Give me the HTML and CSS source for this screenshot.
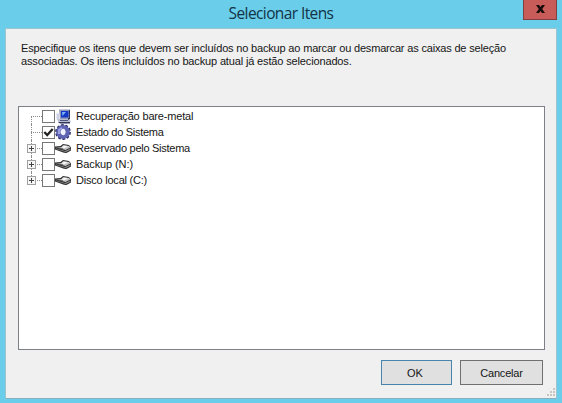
FILE: index.html
```html
<!DOCTYPE html>
<html lang="pt-BR">
<head>
<meta charset="utf-8">
<title>Selecionar Itens</title>
<link rel="stylesheet" href="styles.css">
</head>
<body>
<svg class="defs" aria-hidden="true">
  <symbol id="disk" viewBox="0 0 16 16">
    <path d="M0 6.500L5.500 6 8 4l6 1 2 2.500v3L11.500 13 9 12.700 0 9.500z" fill="#303030"/>
    <path d="M.5 7L6 7.200 8.500 5l5.500 1 1.300 1.500L10.500 10z" fill="#c4c4c4"/>
    <path d="M1 8.500l9 2.500 5.500-2.500v1.300L10.800 12 1 9z" fill="#8b8b8b"/>
    <path d="M6.500 7.200l2.500-1.400 4 .8-3.500 1.600z" fill="#f7f7f7"/>
    <path d="M2 7.500l6 1.600" stroke="#555" stroke-width="1"/>
  </symbol>
</svg>
<main class="window">
  <header class="titlebar">
    <h1 class="title">Selecionar Itens</h1>
    <button class="close" aria-label="Fechar"><svg width="9" height="8" viewBox="0 0 9 8"><path d="M0 0h3l1.500 2L6 0h3L6.200 4 9 8H6L4.500 6 3 8H0l2.800-4z" fill="#170b0b"/></svg></button>
  </header>
  <section class="panel">
    <p class="intro"><span class="line one">Especifique os itens que devem ser incluídos no backup ao marcar ou desmarcar as caixas de seleção</span><span class="line two">associadas. Os itens incluídos no backup atual já estão selecionados.</span></p>
    <ul class="tree">
      <li class="row first"><span class="branch"></span><span class="check"></span>
        <svg class="icon" viewBox="0 0 16 16"><path d="M4 1.500h11v9.500H5z" fill="#8f98b8"/><path d="M6 3h7.500v6.500H6z" fill="#1437c5"/><path d="M7 4h4L7.500 8z" fill="#79b2f5"/><path d="M2 11h12l2 2.500-2 1.500H4z" fill="#b9bdd0"/><path d="M1.500 5l3 1v5l-3 .5z" fill="#cdd1e6"/><path d="M15 2v9l-2 1V10h1V2zM3 14h12v1.500H5z" fill="#30355c"/><path d="M5 12.500h8" stroke="#50567d"/></svg>
        <span class="label l1">Recuperação bare-metal</span></li>
      <li class="row"><span class="branch"></span><span class="check"><svg width="11" height="11" viewBox="0 0 11 11"><path d="M1.300 5L4.200 8 9.700 2" fill="none" stroke="#222" stroke-width="2.300"/></svg></span>
        <svg class="icon" viewBox="0 0 16 16"><circle cx="8" cy="8" r="6.800" fill="none" stroke="#25265e" stroke-width="2.200" stroke-dasharray="2.670 1.600"/><circle cx="8" cy="8" r="4.700" fill="none" stroke="#5f64b2" stroke-width="4.400"/><path d="M4 10V6l3-2" fill="none" stroke="#a5abea" stroke-width="1.700"/><ellipse cx="8.300" cy="8" rx="2" ry="3.300" fill="#f0f1ff"/></svg>
        <span class="label l2">Estado do Sistema</span></li>
      <li class="row"><span class="branch"><span class="plus"></span></span><span class="check"></span><svg class="icon"><use href="#disk"/></svg><span class="label l3">Reservado pelo Sistema</span></li>
      <li class="row"><span class="branch"><span class="plus"></span></span><span class="check"></span><svg class="icon"><use href="#disk"/></svg><span class="label l4">Backup (N:)</span></li>
      <li class="row last"><span class="branch"><span class="plus"></span></span><span class="check"></span><svg class="icon"><use href="#disk"/></svg><span class="label l5">Disco local (C:)</span></li>
    </ul>
    <footer class="actions"><button class="btn ok">OK</button><button class="btn cancel">Cancelar</button></footer>
    <svg class="grip" width="9" height="9" viewBox="0 0 9 9"><path d="M6 0h2v2H6zM3 3h2v2H3zM6 3h2v2H6zM0 6h2v2H0zM3 6h2v2H3zM6 6h2v2H6z" fill="#c9c5c0"/></svg>
  </section>
</main>
</body>
</html>
```
FILE: styles.css
```css
* { box-sizing: border-box; }
body { margin: 0; font: 11px/13px "Liberation Sans", Arial, sans-serif; color: #161616; }
.defs { display: none; }
.window { width: 562px; height: 403px; padding: 0 5px; background: #6acdea; display: flex; flex-direction: column; }
.titlebar { height: 28px; flex: none; display: flex; justify-content: flex-end; position: relative; }
.title { position: absolute; left: 0; right: 0; top: 4px; margin: 0; text-align: center; font: 15.5px/19px "Open Sans", "Noto Sans", sans-serif; letter-spacing: -.6px; color: #123447; }
.close { width: 34px; height: 20px; padding: 0; border: 1px solid #843e40; border-top: 0; background: #c75c58; display: flex; align-items: center; justify-content: center; position: relative; }
.close svg { margin-top: -2px; }
.panel { height: 371px; border: 1px solid #9cc5d2; border-bottom-color: #8aaebb; background: #f0f0f0; padding: 13px 12px 0; position: relative; }
.intro { margin: 0; padding-left: 3px; height: 64px; }
.line { display: block; white-space: nowrap; width: max-content; }
.line.one { letter-spacing: -.175px; }
.line.two { letter-spacing: -.145px; }
.tree { list-style: none; margin: 0; padding: 1px 0 0 8px; width: 527px; height: 244px; border: 1px solid #7d8087; background: #fff; }
.row { height: 16px; display: flex; align-items: center; }
.branch { width: 15px; height: 16px; position: relative; flex: none; }
.branch::before { content: ""; position: absolute; left: 4px; top: 0; height: 16px; border-left: 1px dotted #8c8c8c; }
.first .branch::before { top: 8px; height: 8px; }
.last .branch::before { height: 8px; }
.branch::after { content: ""; position: absolute; left: 4px; top: 8px; width: 11px; border-top: 1px dotted #8c8c8c; }
.plus { position: absolute; z-index: 1; left: 0; top: 4px; width: 9px; height: 9px; border: 1px solid #a0a0a0; background: linear-gradient(#444, #444) center/5px 1px no-repeat, linear-gradient(#444, #444) center/1px 5px no-repeat, #f6f6f6; }
.check { width: 13px; height: 13px; flex: none; border: 1px solid #777; background: #fff; }
.check svg { display: block; }
.icon { width: 16px; height: 16px; flex: none; margin-right: 5px; }
.label { white-space: nowrap; }
.l1 { letter-spacing: -.17px; }
.l2 { letter-spacing: -.28px; }
.l3 { letter-spacing: -.27px; }
.l4 { letter-spacing: -.1px; }
.l5 { letter-spacing: -.22px; }
.actions { display: flex; justify-content: flex-end; gap: 8px; margin-top: 10px; padding-right: 1px; }
.btn { height: 25px; padding: 1px 0 0; border: 1px solid #707070; background: #e0e0e0; font: inherit; color: inherit; letter-spacing: -.2px; }
.ok { width: 71px; border-color: #4785ad; letter-spacing: 0; padding-right: 3px; }
.cancel { width: 83px; }
.grip { position: absolute; right: 0; bottom: 1px; }
```
